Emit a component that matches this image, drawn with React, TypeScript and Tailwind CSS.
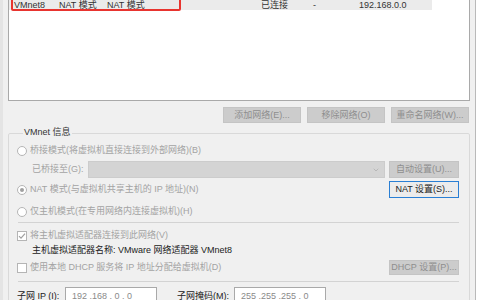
import React from 'react';
import { ChevronDown } from 'lucide-react';

function Radio({ label, checked }: { label: string; checked?: boolean }) {
  return (
    <div className="flex items-center h-[11px]">
      <span className="w-[10px] h-[10px] rounded-full border border-[#b5b5b5] bg-white flex items-center justify-center shrink-0">
        {checked && <span className="w-[4px] h-[4px] rounded-full bg-[#a0a0a0]" />}
      </span>
      <span className="ml-[3px] text-[#a3a3a3] whitespace-nowrap">{label}</span>
    </div>
  );
}

function Check({ label, checked }: { label: string; checked?: boolean }) {
  return (
    <div className="flex items-center h-[11px]">
      <span className="w-[10px] h-[10px] border border-[#b5b5b5] bg-white flex items-center justify-center shrink-0">
        {checked && (
          <svg width="8" height="8" viewBox="0 0 8 8">
            <path d="M1 4.2 L3 6.2 L7 1.6" fill="none" stroke="#a0a0a0" strokeWidth="1.2" />
          </svg>
        )}
      </span>
      <span className="ml-[3px] text-[#a3a3a3] whitespace-nowrap">{label}</span>
    </div>
  );
}

function Btn({ label, w = 'w-[78px]', focused }: { label: string; w?: string; focused?: boolean }) {
  return (
    <div
      className={`${w} h-full flex items-center justify-center whitespace-nowrap border ${
        focused ? 'border-[#2a7fd4] bg-[#ececec] text-[#222]' : 'border-[#c4c4c4] bg-[#cccccc] text-[#8e8e8e]'
      }`}
    >
      {label}
    </div>
  );
}

export default function App() {
  return (
    <div className="w-[480px] h-[300px] overflow-hidden bg-white font-['Liberation_Sans','Noto_Sans_CJK_SC',sans-serif] text-[9px] leading-none">
      <div className="w-[476px] h-full bg-[#f0f0f0] border-l-[3px] border-l-[#e4e4e4] border-r border-r-[#b9b9b9] relative">
        <div className="ml-[5px] w-[462px] relative">
          {/* network list */}
          <div className="h-[101px] bg-white border-x border-b border-[#a9a9a9]">
            <div className="w-[423px] h-[10px] bg-[#ebebeb] flex items-center text-[#333] pl-[5px] whitespace-nowrap">
              <span className="w-[45px]">VMnet8</span>
              <span className="w-[48px]">NAT 模式</span>
              <span className="w-[154px]">NAT 模式</span>
              <span className="w-[52px]">已连接</span>
              <span className="w-[46px]">-</span>
              <span>192.168.0.0</span>
            </div>
          </div>
          <div className="absolute left-[3px] top-[-4px] w-[170px] h-[15px] border-2 border-[#e8342f] rounded-[2px]" />

          {/* list buttons */}
          <div className="mt-[6px] h-[16px] flex justify-end gap-[6px] pr-[1px]">
            <Btn label="添加网络(E)..." />
            <Btn label="移除网络(O)" />
            <Btn label="重命名网络(W)..." />
          </div>

          {/* VMnet info */}
          <fieldset className="mt-[5px] h-[200px] border border-[#d9d9d9] rounded-[2px] pl-[8px] pr-[10px]">
            <legend className="ml-[6px] px-[1px] h-[10px] text-[#333]">VMnet 信息</legend>

            <div className="mt-[7px]">
              <Radio label="桥接模式(将虚拟机直接连接到外部网络)(B)" />
            </div>

            <div className="mt-[5px] h-[17px] flex items-center gap-[4px]">
              <span className="ml-[15px] w-[52px] text-[#a3a3a3] whitespace-nowrap">已桥接至(G):</span>
              <div className="flex-1 h-full bg-[#d4d4d4] border border-[#cccccc] flex items-center justify-end pr-[4px]">
                <ChevronDown className="w-[8px] h-[8px] text-[#9a9a9a]" strokeWidth={1.5} />
              </div>
              <Btn label="自动设置(U)..." w="w-[70px]" />
            </div>

            <div className="mt-[3px] h-[17px] flex items-center">
              <div className="flex-1">
                <Radio label="NAT 模式(与虚拟机共享主机的 IP 地址)(N)" checked />
              </div>
              <Btn label="NAT 设置(S)..." w="w-[70px]" focused />
            </div>

            <div className="mt-[8px]">
              <Radio label="仅主机模式(在专用网络内连接虚拟机)(H)" />
            </div>

            <div className="mt-[5px] ml-px h-px bg-[#d3d3d3]" />

            <div className="mt-[7px]">
              <Check label="将主机虚拟适配器连接到此网络(V)" checked />
            </div>

            <div className="mt-[4px] h-[11px] flex items-center ml-[15px] text-[#222] whitespace-nowrap">
              主机虚拟适配器名称: VMware 网络适配器 VMnet8
            </div>

            <div className="mt-[4px] h-[15px] flex items-center">
              <div className="flex-1">
                <Check label="使用本地 DHCP 服务将 IP 地址分配给虚拟机(D)" />
              </div>
              <Btn label="DHCP 设置(P)..." w="w-[70px]" />
            </div>

            <div className="mt-[6px] ml-px h-px bg-[#d3d3d3]" />

            <div className="mt-[5px] h-[18px] flex items-center text-[#222]">
              <span className="w-[48px] whitespace-nowrap">子网 IP (I):</span>
              <div className="w-[92px] h-full bg-white border border-[#a9a9a9] flex items-center pl-[6px] text-[#8a8a8a] whitespace-nowrap">
                192 .168 . 0 . 0
              </div>
              <span className="ml-[20px] w-[57px] whitespace-nowrap">子网掩码(M):</span>
              <div className="w-[92px] h-full bg-white border border-[#a9a9a9] flex items-center pl-[6px] text-[#8a8a8a] whitespace-nowrap">
                255 .255 .255 . 0
              </div>
            </div>
          </fieldset>
        </div>
      </div>
    </div>
  );
}
